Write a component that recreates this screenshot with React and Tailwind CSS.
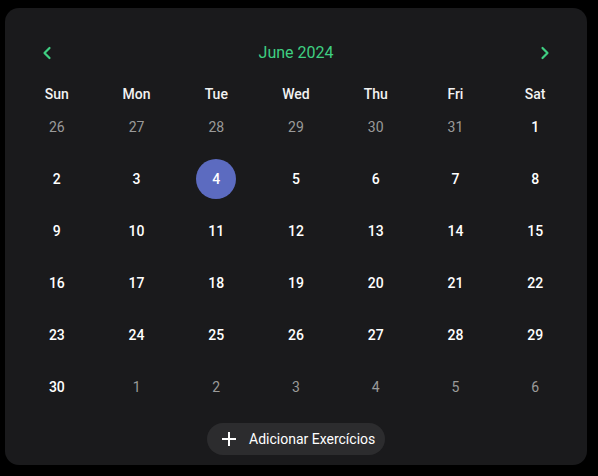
import React from "react";

const weeks = [
  [[26, 0], [27, 0], [28, 0], [29, 0], [30, 0], [31, 0], [1, 1]],
  [[2, 1], [3, 1], [4, 1], [5, 1], [6, 1], [7, 1], [8, 1]],
  [[9, 1], [10, 1], [11, 1], [12, 1], [13, 1], [14, 1], [15, 1]],
  [[16, 1], [17, 1], [18, 1], [19, 1], [20, 1], [21, 1], [22, 1]],
  [[23, 1], [24, 1], [25, 1], [26, 1], [27, 1], [28, 1], [29, 1]],
  [[30, 1], [1, 0], [2, 0], [3, 0], [4, 0], [5, 0], [6, 0]],
];
const days = ["Sun", "Mon", "Tue", "Wed", "Thu", "Fri", "Sat"];

export default function App() {
  return (
    <div className="w-[598px] h-[476px] bg-black pl-[5px] pt-[8px]" style={{ fontFamily: "Roboto, 'Noto Sans', sans-serif" }}>
      <div className="w-[582px] h-[457px] bg-[#1a1a1c] rounded-[14px] px-[12px] pt-[33px] flex flex-col">
        <div className="flex items-center justify-between h-[24px] px-[25px]">
          <svg width="10" height="14" viewBox="0 0 10 14" fill="none">
            <path d="M7.5 2 L2.5 7 L7.5 12" stroke="#3fcf82" strokeWidth="2.2" strokeLinecap="round" strokeLinejoin="round" />
          </svg>
          <span className="text-[16px] text-[#3fcf82]">June 2024</span>
          <svg width="10" height="14" viewBox="0 0 10 14" fill="none">
            <path d="M2.5 2 L7.5 7 L2.5 12" stroke="#3fcf82" strokeWidth="2.2" strokeLinecap="round" strokeLinejoin="round" />
          </svg>
        </div>
        <div className="grid grid-cols-7 mt-[19px] h-[20px] items-center">
          {days.map((d) => (
            <div key={d} className="text-center text-[14px] font-medium text-[#f2f2f2]">{d}</div>
          ))}
        </div>
        <div className="flex flex-col mt-[3px]">
          {weeks.map((w, i) => (
            <div key={i} className="grid grid-cols-7 h-[52px]">
              {w.map(([n, cur], j) => {
                const sel = i === 1 && j === 2;
                return (
                  <div key={j} className="flex justify-center items-start">
                    <div
                      className={
                        "w-[40px] h-[40px] rounded-full flex items-center justify-center text-[14px] " +
                        (sel ? "bg-[#5c6bc0] text-white font-medium" : cur ? "text-white font-medium" : "text-[#9a9a9a]")
                      }
                    >
                      {n}
                    </div>
                  </div>
                );
              })}
            </div>
          ))}
        </div>
        <div className="flex justify-center mt-[4px]">
          <button className="h-[32px] w-[178px] rounded-full bg-[#2c2c2e] flex items-center pl-[13px] gap-[11px] text-[14px] text-white">
            <svg width="18" height="18" viewBox="0 0 18 18" fill="none">
              <path d="M9 2 V16 M2 9 H16" stroke="white" strokeWidth="2" />
            </svg>
            <span>Adicionar Exercícios</span>
          </button>
        </div>
      </div>
    </div>
  );
}
